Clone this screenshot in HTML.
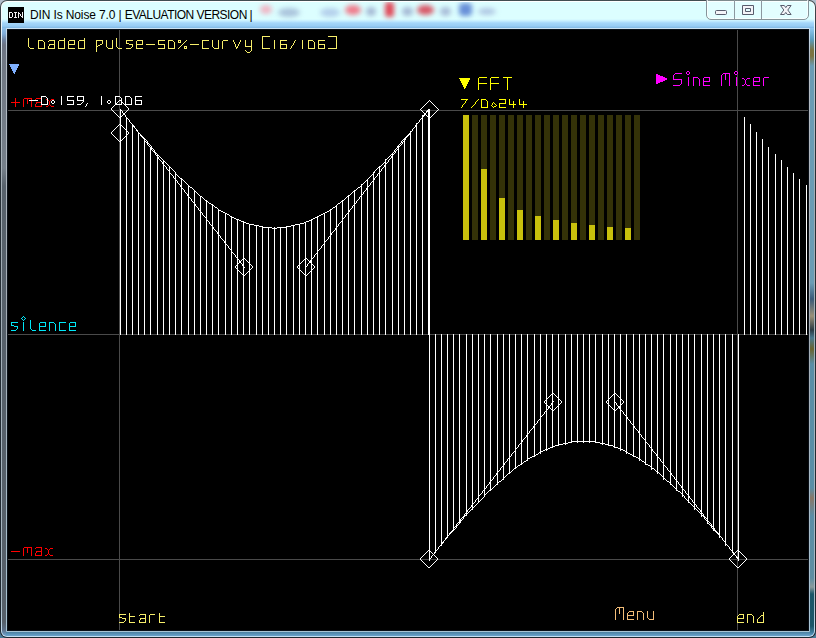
<!DOCTYPE html>
<html><head><meta charset="utf-8"><title>DIN Is Noise</title>
<style>
html,body{margin:0;padding:0;background:linear-gradient(to bottom,#b2becd 0px,#9aa6b4 40px,#4a7a98 600px);}
body{width:816px;height:638px;overflow:hidden;position:relative;font-family:"Liberation Sans",sans-serif;}
.frame{position:absolute;left:0;top:0;width:816px;height:638px;border-radius:7px;background:linear-gradient(to bottom,#424e52 0px,#2a3238 40px,#1e2830 100%);overflow:hidden;}
.hl{position:absolute;left:1px;top:1px;right:1px;bottom:1px;border-radius:6px;background:linear-gradient(to bottom,#ffffff 0px,#e8f4fc 30px,#b8c4cc 70px,#a0aab2 200px,#a8b8c4 600px,#c4e0f4 636px);}
.glass{position:absolute;left:2px;top:2px;right:2px;bottom:2px;border-radius:5px;overflow:hidden;
 background:linear-gradient(to bottom,#dcfeff 0px,#dcfeff 17px,#c4ecff 19px,#a4d6fa 21px,#98ccf4 24px,#84bce8 25.5px,#8cbce0 28px,#8cbce0 100%);}
.lglass{position:absolute;left:0;top:26px;width:5px;bottom:0;
 background:linear-gradient(to bottom,#90c0e8 0px,#80acd8 6px,#6e82a0 12px,#6c7484 17px,#707884 32px,#76808a 140px,#58626c 158px,#56606a 594px,#5c7088 602px,#6c9cc4 607px);}
.rglass{position:absolute;right:0;top:26px;width:5px;bottom:0;
 background:linear-gradient(to bottom,#90c8f0 0px,#5a9cbc 12px,#7a7444 22px,#7a7444 28px,#6a9cb4 38px,#6a9cb4 255px,#3a5a78 271px,#9a9078 288px,#2a3a44 302px,#4a7a90 310px,#6a6430 321px,#5a8ea6 336px,#5a8ea6 460px,#8a7868 470px,#5a8ea6 488px,#5e8ea2 550px,#8a9a9c 559px,#1c5668 566px,#1c5668 598px,#3c7a98 604px,#64a0c8 608px);}
.bglass{position:absolute;left:4px;right:4px;bottom:0;height:5px;background:linear-gradient(to bottom,#4a80a2 0px,#4a80a2 1px,#6aa4cc 5px);}
.blob{position:absolute;border-radius:50%;filter:blur(2.5px);}
.ihl{position:absolute;left:6px;top:28px;width:804px;height:604px;background:linear-gradient(to bottom,#cce2f4 0px,#b4bcc4 30px,#a4acb4 300px,#a8c4d4 604px);border-radius:1px;}
.idk{position:absolute;left:7px;top:29px;width:802px;height:602px;background:#0a1018;}
.content{position:absolute;left:8px;top:30px;width:800px;height:600px;background:#000;overflow:hidden;}
.gl{position:absolute;left:0;top:0;display:block;}
.icon{position:absolute;left:8px;top:7px;width:16px;height:16px;background:#000;}
.icon span{position:absolute;left:1px;top:4px;width:14px;text-align:center;font-size:7px;line-height:8px;color:#fff;font-weight:bold;letter-spacing:0px;}
.title{position:absolute;left:30px;top:7px;height:16px;line-height:16px;font-size:12px;color:#000;white-space:nowrap;letter-spacing:0px;}
.btns{position:absolute;left:706px;top:-4px;width:103px;height:24px;border:1px solid #86949a;border-radius:0 0 5px 5px;box-shadow:inset 0 0 0 1px rgba(255,255,255,.7);box-sizing:border-box;background:rgba(240,255,255,.35);}
.btns i{position:absolute;top:0;bottom:0;width:1px;background:#8c98a0;}
</style></head><body>
<div class="frame"><div class="hl"></div><div class="glass">
 <div class="blob" style="left:258px;top:3px;width:12px;height:9px;background:#f0b4c4"></div>
 <div class="blob" style="left:276px;top:6px;width:22px;height:9px;background:#aac4dc"></div>
 <div class="blob" style="left:318px;top:6px;width:20px;height:9px;background:#b4d0ec"></div>
 <div class="blob" style="left:343px;top:3px;width:16px;height:10px;background:#f07c8c"></div>
 <div class="blob" style="left:364px;top:5px;width:10px;height:9px;background:#a4b8d4"></div>
 <div class="blob" style="left:383px;top:0px;width:9px;height:15px;background:#e04858;border-radius:3px"></div>
 <div class="blob" style="left:400px;top:5px;width:11px;height:9px;background:#a4b8d4"></div>
 <div class="blob" style="left:415px;top:3px;width:17px;height:10px;background:#d85868"></div>
 <div class="blob" style="left:438px;top:5px;width:11px;height:9px;background:#a8bcd8"></div>
 <div class="blob" style="left:457px;top:1px;width:13px;height:13px;background:#6890d8;border-radius:4px"></div>
 <div class="blob" style="left:476px;top:6px;width:18px;height:7px;background:#b0c8e4"></div>
 <div class="lglass"></div><div class="rglass"></div><div class="bglass"></div>
</div>
<div class="icon"><svg width="16" height="16" viewBox="0 0 16 16" shape-rendering="crispEdges" style="position:absolute;left:0;top:0"><path d="M1,5h1v1h-1zM2,5h1v1h-1zM3,5h1v1h-1zM1,6h1v1h-1zM4,6h1v1h-1zM1,7h1v1h-1zM4,7h1v1h-1zM1,8h1v1h-1zM4,8h1v1h-1zM1,9h1v1h-1zM4,9h1v1h-1zM1,10h1v1h-1zM2,10h1v1h-1zM3,10h1v1h-1zM6,5h1v1h-1zM7,5h1v1h-1zM8,5h1v1h-1zM7,6h1v1h-1zM7,7h1v1h-1zM7,8h1v1h-1zM7,9h1v1h-1zM6,10h1v1h-1zM7,10h1v1h-1zM8,10h1v1h-1zM10,5h1v1h-1zM14,5h1v1h-1zM10,6h1v1h-1zM11,6h1v1h-1zM14,6h1v1h-1zM10,7h1v1h-1zM12,7h1v1h-1zM14,7h1v1h-1zM10,8h1v1h-1zM12,8h1v1h-1zM14,8h1v1h-1zM10,9h1v1h-1zM13,9h1v1h-1zM14,9h1v1h-1zM10,10h1v1h-1zM14,10h1v1h-1z" fill="#f2f2f2"/></svg></div>
<div class="title"><span style="letter-spacing:-0.126px">DIN Is Noise 7.0 | </span><span style="letter-spacing:-0.53px">EVALUATION VERSION |</span></div>
<div class="btns"><i style="left:27px"></i><i style="left:54px"></i>
<svg style="position:absolute;left:-1px;top:-1px" width="102" height="23" viewBox="706 -4 102 23">
 <rect x="715.5" y="10.5" width="11" height="4" rx="1" fill="#f4f4f8" stroke="#585c6c"/>
 <path fill-rule="evenodd" d="M742.5,5.5 H753.5 V14.5 H742.5 Z M745.5,8.5 V11.5 H750.5 V8.5 Z" fill="#f4f4f8" stroke="#585c6c"/>
 <path d="M780.5,5.5 H784.3 L785.8,7.6 L787.3,5.5 H791.1 L787.8,10 L791.1,14.5 H787.3 L785.8,12.4 L784.3,14.5 H780.5 L783.8,10 Z" fill="#f4f4f8" stroke="#585c6c"/>
</svg></div>
<div class="ihl"></div><div class="idk"></div>
<div class="content">
<svg class="gl" width="800" height="600" viewBox="8 30 800 600" shape-rendering="crispEdges" fill="none" stroke-width="1" stroke-linecap="square" stroke-linejoin="miter">
<path d="M8,110.5 H808 M8,334.5 H808 M8,559.5 H808 M119.5,30 V630 M737.5,30 V630" stroke="#4a4a4a"/>
<rect x="463" y="115" width="6" height="125" fill="#343208"/>
<rect x="463" y="115" width="6" height="125" fill="#c8c00c"/>
<rect x="472" y="115" width="6" height="125" fill="#343208"/>
<rect x="481" y="115" width="6" height="125" fill="#343208"/>
<rect x="481" y="169" width="6" height="71" fill="#c8c00c"/>
<rect x="490" y="115" width="6" height="125" fill="#343208"/>
<rect x="499" y="115" width="6" height="125" fill="#343208"/>
<rect x="499" y="198" width="6" height="42" fill="#c8c00c"/>
<rect x="508" y="115" width="6" height="125" fill="#343208"/>
<rect x="517" y="115" width="6" height="125" fill="#343208"/>
<rect x="517" y="210" width="6" height="30" fill="#c8c00c"/>
<rect x="526" y="115" width="6" height="125" fill="#343208"/>
<rect x="535" y="115" width="6" height="125" fill="#343208"/>
<rect x="535" y="216" width="6" height="24" fill="#c8c00c"/>
<rect x="544" y="115" width="6" height="125" fill="#343208"/>
<rect x="553" y="115" width="6" height="125" fill="#343208"/>
<rect x="553" y="220" width="6" height="20" fill="#c8c00c"/>
<rect x="562" y="115" width="6" height="125" fill="#343208"/>
<rect x="571" y="115" width="6" height="125" fill="#343208"/>
<rect x="571" y="223" width="6" height="17" fill="#c8c00c"/>
<rect x="580" y="115" width="6" height="125" fill="#343208"/>
<rect x="589" y="115" width="6" height="125" fill="#343208"/>
<rect x="589" y="225" width="6" height="15" fill="#c8c00c"/>
<rect x="598" y="115" width="6" height="125" fill="#343208"/>
<rect x="607" y="115" width="6" height="125" fill="#343208"/>
<rect x="607" y="227" width="6" height="13" fill="#c8c00c"/>
<rect x="616" y="115" width="6" height="125" fill="#343208"/>
<rect x="625" y="115" width="6" height="125" fill="#343208"/>
<rect x="625" y="228" width="6" height="12" fill="#c8c00c"/>
<rect x="634" y="115" width="6" height="125" fill="#343208"/>
<path d="M428.5,109 V334 M120.5,109 V334 M126.5,117 V334 M132.5,124 V334 M138.5,132 V334 M144.5,139 V334 M150.5,147 V334 M157.5,154 V334 M163.5,160 V334 M169.5,167 V334 M175.5,173 V334 M181.5,179 V334 M188.5,185 V334 M194.5,190 V334 M200.5,196 V334 M206.5,201 V334 M212.5,205 V334 M218.5,209 V334 M225.5,213 V334 M231.5,216 V334 M237.5,219 V334 M243.5,222 V334 M249.5,224 V334 M256.5,225 V334 M262.5,227 V334 M268.5,227 V334 M274.5,227 V334 M280.5,227 V334 M286.5,227 V334 M293.5,225 V334 M299.5,224 V334 M305.5,222 V334 M311.5,219 V334 M317.5,216 V334 M324.5,213 V334 M330.5,209 V334 M336.5,205 V334 M342.5,200 V334 M348.5,195 V334 M354.5,190 V334 M361.5,184 V334 M367.5,179 V334 M373.5,172 V334 M379.5,166 V334 M385.5,159 V334 M392.5,153 V334 M398.5,146 V334 M404.5,138 V334 M410.5,131 V334 M416.5,123 V334 M422.5,115 V334 M429.5,109 V560 M435.5,334 V552 M441.5,334 V545 M447.5,334 V537 M453.5,334 V530 M459.5,334 V522 M466.5,334 V515 M472.5,334 V509 M478.5,334 V502 M484.5,334 V496 M490.5,334 V490 M497.5,334 V484 M503.5,334 V479 M509.5,334 V473 M515.5,334 V468 M521.5,334 V464 M527.5,334 V460 M534.5,334 V456 M540.5,334 V453 M546.5,334 V450 M552.5,334 V447 M558.5,334 V445 M565.5,334 V444 M571.5,334 V442 M577.5,334 V442 M583.5,334 V442 M589.5,334 V442 M595.5,334 V442 M602.5,334 V444 M608.5,334 V445 M614.5,334 V447 M620.5,334 V450 M626.5,334 V453 M633.5,334 V456 M639.5,334 V460 M645.5,334 V464 M651.5,334 V469 M657.5,334 V473 M663.5,334 V479 M670.5,334 V484 M676.5,334 V490 M682.5,334 V496 M688.5,334 V502 M694.5,334 V509 M701.5,334 V516 M707.5,334 V523 M713.5,334 V530 M719.5,334 V537 M725.5,334 V545 M732.5,334 V552 M738.5,334 V560 M744.5,117 V334 M750.5,124 V334 M756.5,132 V334 M762.5,139 V334 M768.5,147 V334 M775.5,154 V334 M781.5,160 V334 M787.5,167 V334 M793.5,173 V334 M799.5,179 V334 M806.5,185 V334" stroke="#fff"/>
<path d="M553,446h2v1h-2zM613,446h2v1h-2zM460,520h2v1h-2zM706,520h2v1h-2zM415,125h2v1h-2zM428,567h2v1h-2zM737,567h2v1h-2zM548,448h2v1h-2zM618,448h2v1h-2zM205,200h2v1h-2zM342,200h2v1h-2zM423,115h2v1h-2zM552,393h2v1h-2zM614,393h2v1h-2zM244,222h2v1h-2zM304,222h2v1h-2zM489,490h2v1h-2zM190,187h2v1h-2zM358,187h2v1h-2zM530,457h2v1h-2zM636,457h2v1h-2zM514,468h2v1h-2zM652,468h2v1h-2zM628,453h2v1h-2zM455,526h2v1h-2zM711,526h2v1h-2zM180,178h2v1h-2zM239,220h2v1h-2zM309,220h2v1h-2zM151,148h2v1h-2zM548,406h2v1h-2zM618,406h2v1h-2zM227,214h2v1h-2zM321,214h2v1h-2zM442,542h2v1h-2zM211,204h2v1h-2zM552,410h2v1h-2zM614,410h2v1h-2zM153,151h2v1h-2zM394,151h2v1h-2zM154,152h2v1h-2zM548,407h2v1h-2zM618,407h2v1h-2zM543,450h2v1h-2zM623,450h2v1h-2zM263,227h9v1h-9zM277,227h9v1h-9zM550,447h3v1h-3zM615,447h3v1h-3zM241,221h3v1h-3zM306,221h3v1h-3zM272,228h5v1h-5zM736,557h2v1h-2zM223,212h2v1h-2zM325,212h2v1h-2zM555,445h3v1h-3zM609,445h4v1h-4zM249,224h5v1h-5zM295,224h5v1h-5zM524,461h2v1h-2zM642,461h2v1h-2zM123,114h2v1h-2zM424,114h2v1h-2zM520,464h2v1h-2zM646,464h2v1h-2zM568,442h4v1h-4zM595,442h5v1h-5zM319,215h2v1h-2zM558,444h5v1h-5zM605,444h4v1h-4zM408,134h2v1h-2zM230,216h2v1h-2zM317,216h2v1h-2zM155,153h2v1h-2zM463,516h2v1h-2zM703,516h2v1h-2zM572,441h23v1h-23zM136,130h2v1h-2zM563,443h5v1h-5zM600,443h5v1h-5zM239,262h2v1h-2zM309,262h2v1h-2zM119,117h2v1h-2zM456,525h2v1h-2zM710,525h2v1h-2zM119,141h2v1h-2zM150,147h2v1h-2zM397,147h2v1h-2zM464,515h2v1h-2zM702,515h2v1h-2zM141,136h2v1h-2zM406,136h2v1h-2zM236,219h3v1h-3zM311,219h2v1h-2zM459,521h2v1h-2zM707,521h2v1h-2zM243,258h2v1h-2zM305,258h2v1h-2zM541,451h2v1h-2zM625,451h2v1h-2zM147,143h2v1h-2zM225,213h2v1h-2zM323,213h2v1h-2zM428,550h2v1h-2zM737,550h2v1h-2zM259,226h4v1h-4zM286,226h5v1h-5zM221,211h2v1h-2zM327,211h2v1h-2zM539,452h2v1h-2zM246,223h3v1h-3zM300,223h4v1h-4zM200,196h2v1h-2zM347,196h2v1h-2zM232,217h2v1h-2zM315,217h2v1h-2zM215,207h2v1h-2zM333,207h2v1h-2zM426,111h2v1h-2zM509,472h2v1h-2zM657,472h2v1h-2zM144,139h2v1h-2zM534,455h2v1h-2zM632,455h2v1h-2zM254,225h5v1h-5zM291,225h4v1h-4zM146,142h2v1h-2zM401,142h2v1h-2zM678,491h2v1h-2zM733,553h2v1h-2zM499,481h2v1h-2zM667,481h2v1h-2zM143,138h2v1h-2zM404,138h2v1h-2zM518,465h2v1h-2zM648,465h2v1h-2zM133,126h2v1h-2zM528,458h2v1h-2zM638,458h2v1h-2zM243,275h2v1h-2zM305,275h2v1h-2zM532,456h2v1h-2zM634,456h2v1h-2zM733,554h2v1h-2zM123,113h2v1h-2zM424,113h2v1h-2zM545,449h3v1h-3zM620,449h3v1h-3zM234,218h2v1h-2zM313,218h2v1h-2zM119,124h2v1h-2zM209,203h2v1h-2zM338,203h2v1h-2zM140,135h2v1h-2zM407,135h2v1h-2zM453,529h2v1h-2zM713,529h2v1h-2zM445,538h2v1h-2zM536,454h2v1h-2zM630,454h2v1h-2zM451,531h2v1h-2zM715,531h2v1h-2zM239,261h2v1h-2zM309,261h2v1h-2zM353,191h2v1h-2zM450,532h2v1h-2zM716,532h2v1h-2zM219,210h2v1h-2zM329,210h2v1h-2zM379,166h2v1h-2zM119,100h2v1h-2zM142,137h2v1h-2zM405,137h2v1h-2zM452,530h2v1h-2zM714,530h2v1h-2zM462,517h2v1h-2zM704,517h2v1h-2zM449,533h2v1h-2zM717,533h2v1h-2zM499,470h1v1h-1zM512,453h1v1h-1zM512,470h1v1h-1zM655,453h1v1h-1zM655,470h1v1h-1zM668,470h1v1h-1zM112,107h1v1h-1zM112,110h1v1h-1zM112,131h1v1h-1zM112,134h1v1h-1zM127,107h1v1h-1zM127,110h1v1h-1zM127,118h1v1h-1zM127,131h1v1h-1zM127,134h1v1h-1zM422,107h1v1h-1zM422,111h1v1h-1zM422,117h1v1h-1zM422,556h1v1h-1zM422,561h1v1h-1zM436,107h1v1h-1zM436,111h1v1h-1zM436,550h1v1h-1zM436,557h1v1h-1zM436,560h1v1h-1zM501,467h1v1h-1zM501,480h1v1h-1zM516,448h1v1h-1zM516,467h1v1h-1zM651,448h1v1h-1zM651,467h1v1h-1zM666,467h1v1h-1zM666,480h1v1h-1zM111,108h1v2h-1zM111,132h1v2h-1zM128,108h1v2h-1zM128,119h1v1h-1zM128,132h1v2h-1zM138,132h1v1h-1zM410,132h1v1h-1zM518,445h1v2h-1zM649,445h1v2h-1zM221,238h1v1h-1zM328,237h1v2h-1zM118,101h1v1h-1zM118,116h1v1h-1zM118,125h1v1h-1zM118,140h1v1h-1zM121,101h1v1h-1zM121,110h1v1h-1zM121,116h1v1h-1zM121,125h1v1h-1zM121,140h1v1h-1zM133,125h1v1h-1zM191,199h1v2h-1zM357,188h1v1h-1zM357,200h1v1h-1zM117,102h1v1h-1zM117,115h1v1h-1zM117,126h1v1h-1zM117,139h1v1h-1zM122,102h1v1h-1zM122,111h1v2h-1zM122,115h1v1h-1zM122,126h1v1h-1zM122,139h1v1h-1zM125,105h1v1h-1zM125,112h1v1h-1zM125,115h1v2h-1zM125,129h1v1h-1zM125,136h1v1h-1zM426,103h1v1h-1zM426,112h1v1h-1zM426,115h1v1h-1zM426,552h1v1h-1zM426,565h1v1h-1zM432,103h1v1h-1zM432,115h1v1h-1zM432,553h1v1h-1zM432,555h1v1h-1zM432,564h1v1h-1zM209,222h1v2h-1zM340,202h1v1h-1zM340,222h1v1h-1zM137,131h1v1h-1zM411,131h1v1h-1zM483,490h1v1h-1zM483,497h1v1h-1zM677,481h1v1h-1zM677,490h1v1h-1zM684,490h1v1h-1zM684,496h1v2h-1zM147,141h1v1h-1zM147,144h1v1h-1zM149,144h1v1h-1zM149,146h1v1h-1zM399,144h1v1h-1zM399,146h1v1h-1zM401,141h1v1h-1zM401,144h1v1h-1zM162,159h1v1h-1zM162,162h1v2h-1zM165,162h1v1h-1zM165,166h1v1h-1zM384,162h1v1h-1zM384,165h1v2h-1zM387,158h1v1h-1zM387,162h1v1h-1zM181,187h1v1h-1zM367,179h1v1h-1zM367,187h1v1h-1zM491,480h1v1h-1zM491,489h1v1h-1zM676,480h1v1h-1zM676,489h1v1h-1zM457,523h1v1h-1zM459,523h1v1h-1zM708,523h1v1h-1zM710,523h1v1h-1zM148,145h1v1h-1zM150,145h1v1h-1zM398,145h1v1h-1zM398,148h1v1h-1zM400,143h1v1h-1zM400,145h1v1h-1zM509,457h1v1h-1zM658,457h1v1h-1zM500,468h1v2h-1zM667,468h1v2h-1zM538,420h1v1h-1zM538,453h1v1h-1zM182,179h1v1h-1zM182,188h1v1h-1zM192,188h1v1h-1zM192,201h1v1h-1zM366,180h1v1h-1zM366,188h1v2h-1zM471,505h1v2h-1zM471,509h1v1h-1zM474,502h1v1h-1zM474,506h1v1h-1zM693,502h1v1h-1zM693,506h1v1h-1zM696,505h1v2h-1zM696,509h1v1h-1zM242,259h1v1h-1zM242,264h1v2h-1zM242,274h1v1h-1zM245,259h1v1h-1zM245,274h1v1h-1zM304,259h1v1h-1zM304,274h1v1h-1zM307,259h1v1h-1zM307,264h1v2h-1zM307,274h1v1h-1zM174,171h1v1h-1zM174,178h1v1h-1zM368,178h1v1h-1zM368,186h1v1h-1zM374,171h1v2h-1zM374,178h1v2h-1zM166,163h1v1h-1zM166,167h1v2h-1zM171,168h1v1h-1zM171,174h1v1h-1zM377,168h1v1h-1zM377,174h1v2h-1zM382,164h1v1h-1zM382,168h1v1h-1zM446,537h1v1h-1zM721,537h1v1h-1zM207,201h1v1h-1zM207,220h1v1h-1zM342,219h1v2h-1zM187,184h1v1h-1zM187,194h1v2h-1zM198,194h1v1h-1zM198,208h1v2h-1zM350,194h1v1h-1zM350,209h1v1h-1zM362,184h1v1h-1zM362,194h1v1h-1zM442,543h1v1h-1zM725,542h1v2h-1zM396,148h1v1h-1zM396,150h1v1h-1zM530,430h1v1h-1zM637,430h1v1h-1zM465,513h1v1h-1zM467,510h1v2h-1zM467,513h1v1h-1zM700,510h1v2h-1zM700,513h1v1h-1zM702,513h1v1h-1zM423,106h1v1h-1zM423,112h1v1h-1zM423,116h1v1h-1zM423,555h1v1h-1zM423,562h1v1h-1zM434,105h1v1h-1zM434,113h1v1h-1zM434,552h1v2h-1zM434,555h1v1h-1zM434,562h1v1h-1zM732,551h1v1h-1zM732,555h1v1h-1zM732,562h1v1h-1zM735,552h1v1h-1zM735,555h1v1h-1zM735,565h1v1h-1zM743,555h1v1h-1zM743,562h1v1h-1zM116,103h1v1h-1zM116,114h1v1h-1zM116,127h1v1h-1zM116,138h1v1h-1zM123,103h1v1h-1zM123,127h1v1h-1zM123,138h1v1h-1zM557,397h1v1h-1zM557,406h1v1h-1zM610,397h1v1h-1zM610,406h1v1h-1zM202,197h1v1h-1zM202,213h1v2h-1zM346,197h1v1h-1zM346,214h1v1h-1zM420,109h1v1h-1zM420,119h1v1h-1zM420,558h1v2h-1zM430,101h1v1h-1zM430,117h1v1h-1zM430,551h1v1h-1zM430,558h1v1h-1zM430,566h1v1h-1zM437,108h1v1h-1zM437,110h1v1h-1zM437,549h1v1h-1zM437,558h1v2h-1zM729,547h1v2h-1zM729,558h1v2h-1zM737,558h1v1h-1zM746,558h1v2h-1zM195,191h1v1h-1zM195,204h1v2h-1zM337,204h1v1h-1zM337,226h1v1h-1zM354,204h1v1h-1zM545,400h1v1h-1zM545,403h1v1h-1zM545,411h1v1h-1zM560,400h1v1h-1zM560,403h1v1h-1zM607,400h1v1h-1zM607,403h1v1h-1zM622,400h1v1h-1zM622,403h1v1h-1zM622,411h1v1h-1zM546,399h1v1h-1zM546,404h1v1h-1zM546,410h1v1h-1zM621,399h1v1h-1zM621,404h1v1h-1zM621,410h1v1h-1zM476,499h1v1h-1zM476,504h1v1h-1zM481,493h1v1h-1zM481,499h1v1h-1zM686,493h1v1h-1zM686,499h1v1h-1zM691,499h1v1h-1zM691,504h1v1h-1zM179,177h1v1h-1zM179,184h1v1h-1zM370,176h1v1h-1zM370,183h1v2h-1zM237,258h1v1h-1zM237,264h1v1h-1zM237,269h1v1h-1zM250,264h1v1h-1zM250,269h1v1h-1zM299,264h1v1h-1zM299,269h1v1h-1zM312,258h1v1h-1zM312,264h1v1h-1zM312,269h1v1h-1zM544,401h1v2h-1zM544,412h1v2h-1zM553,401h1v1h-1zM561,401h1v2h-1zM606,401h1v2h-1zM614,401h1v1h-1zM623,401h1v2h-1zM623,412h1v2h-1zM460,519h1v1h-1zM460,522h1v1h-1zM462,519h1v1h-1zM705,519h1v1h-1zM707,519h1v1h-1zM707,522h1v1h-1zM478,496h1v2h-1zM478,502h1v1h-1zM484,489h1v1h-1zM484,495h1v2h-1zM689,496h1v2h-1zM689,502h1v1h-1zM115,104h1v1h-1zM115,113h1v1h-1zM115,128h1v1h-1zM115,137h1v1h-1zM124,104h1v1h-1zM124,128h1v1h-1zM124,137h1v1h-1zM135,128h1v1h-1zM413,128h1v1h-1zM393,152h1v1h-1zM393,154h1v1h-1zM395,149h1v1h-1zM395,152h1v1h-1zM486,486h1v2h-1zM486,493h1v1h-1zM494,476h1v1h-1zM494,486h1v1h-1zM673,476h1v1h-1zM673,486h1v1h-1zM681,486h1v2h-1zM681,493h1v1h-1zM158,155h1v1h-1zM158,157h1v2h-1zM160,157h1v1h-1zM160,160h1v1h-1zM388,157h1v1h-1zM388,160h1v2h-1zM391,154h1v1h-1zM391,156h1v2h-1zM556,396h1v1h-1zM556,407h1v1h-1zM611,396h1v1h-1zM611,407h1v1h-1zM184,181h1v1h-1zM184,190h1v2h-1zM194,190h1v1h-1zM194,203h1v1h-1zM355,190h1v1h-1zM355,203h1v1h-1zM365,181h1v1h-1zM365,190h1v1h-1zM515,449h1v2h-1zM652,449h1v2h-1zM213,205h1v1h-1zM213,227h1v2h-1zM336,205h1v1h-1zM336,227h1v1h-1zM168,165h1v1h-1zM168,170h1v1h-1zM173,170h1v1h-1zM173,176h1v2h-1zM375,170h1v1h-1zM375,177h1v1h-1zM381,165h1v1h-1zM381,169h1v2h-1zM180,185h1v2h-1zM188,185h1v1h-1zM188,196h1v1h-1zM361,185h1v1h-1zM361,195h1v1h-1zM369,177h1v1h-1zM369,185h1v1h-1zM169,166h1v1h-1zM169,171h1v2h-1zM380,171h1v1h-1zM517,447h1v1h-1zM517,466h1v1h-1zM650,447h1v1h-1zM650,466h1v1h-1zM208,202h1v1h-1zM208,221h1v1h-1zM341,201h1v1h-1zM341,221h1v1h-1zM335,206h1v1h-1zM335,228h1v2h-1zM427,102h1v1h-1zM427,110h1v1h-1zM427,116h1v1h-1zM427,551h1v1h-1zM427,566h1v1h-1zM435,106h1v1h-1zM435,112h1v1h-1zM435,551h1v1h-1zM435,556h1v1h-1zM435,561h1v1h-1zM736,551h1v1h-1zM736,556h1v1h-1zM736,566h1v1h-1zM739,551h1v1h-1zM739,566h1v1h-1zM552,402h1v1h-1zM615,402h1v1h-1zM424,105h1v1h-1zM424,554h1v1h-1zM424,563h1v1h-1zM433,104h1v1h-1zM433,114h1v1h-1zM433,554h1v1h-1zM433,563h1v1h-1zM733,552h1v1h-1zM733,563h1v1h-1zM742,554h1v1h-1zM742,563h1v1h-1zM431,102h1v1h-1zM431,116h1v1h-1zM431,552h1v1h-1zM431,556h1v2h-1zM431,565h1v1h-1zM421,108h1v1h-1zM421,110h1v1h-1zM421,118h1v1h-1zM421,557h1v1h-1zM421,560h1v1h-1zM730,549h1v1h-1zM730,557h1v1h-1zM730,560h1v1h-1zM745,557h1v1h-1zM745,560h1v1h-1zM201,212h1v1h-1zM348,212h1v1h-1zM210,224h1v1h-1zM338,224h1v2h-1zM506,461h1v1h-1zM506,475h1v1h-1zM661,461h1v1h-1zM661,475h1v1h-1zM223,240h1v1h-1zM326,240h1v1h-1zM529,431h1v2h-1zM638,431h1v2h-1zM504,463h1v2h-1zM504,477h1v1h-1zM663,463h1v2h-1zM663,477h1v1h-1zM139,133h1v1h-1zM409,133h1v1h-1zM238,259h1v1h-1zM238,263h1v1h-1zM238,270h1v1h-1zM249,263h1v1h-1zM249,270h1v1h-1zM300,263h1v1h-1zM300,270h1v1h-1zM311,259h1v1h-1zM311,263h1v1h-1zM311,270h1v1h-1zM493,477h1v2h-1zM493,487h1v1h-1zM674,477h1v2h-1zM674,487h1v1h-1zM444,540h1v1h-1zM723,540h1v1h-1zM540,417h1v2h-1zM627,417h1v2h-1zM627,452h1v1h-1zM521,442h1v1h-1zM646,442h1v1h-1zM134,127h1v1h-1zM414,127h1v1h-1zM429,100h1v1h-1zM429,118h1v1h-1zM429,559h1v1h-1zM738,559h1v1h-1zM203,198h1v1h-1zM203,215h1v1h-1zM229,215h1v1h-1zM229,248h1v1h-1zM345,198h1v1h-1zM345,215h1v2h-1zM528,433h1v1h-1zM639,433h1v1h-1zM236,257h1v1h-1zM236,265h1v1h-1zM236,268h1v1h-1zM251,265h1v1h-1zM251,268h1v1h-1zM298,265h1v1h-1zM298,268h1v1h-1zM313,257h1v1h-1zM313,265h1v1h-1zM313,268h1v1h-1zM519,444h1v1h-1zM648,444h1v1h-1zM140,134h1v1h-1zM731,550h1v1h-1zM731,556h1v1h-1zM731,561h1v1h-1zM744,556h1v1h-1zM744,561h1v1h-1zM239,260h1v1h-1zM239,271h1v1h-1zM248,262h1v1h-1zM248,271h1v1h-1zM301,262h1v1h-1zM301,271h1v1h-1zM310,260h1v1h-1zM310,271h1v1h-1zM231,250h1v2h-1zM317,251h1v2h-1zM204,199h1v1h-1zM204,216h1v1h-1zM177,175h1v1h-1zM177,181h1v2h-1zM185,182h1v1h-1zM185,192h1v1h-1zM364,182h1v1h-1zM364,191h1v1h-1zM371,175h1v1h-1zM371,182h1v1h-1zM392,153h1v1h-1zM392,155h1v1h-1zM394,150h1v1h-1zM394,153h1v1h-1zM551,394h1v1h-1zM551,403h1v2h-1zM551,409h1v1h-1zM616,394h1v1h-1zM616,403h1v2h-1zM616,409h1v1h-1zM559,399h1v1h-1zM559,404h1v1h-1zM608,399h1v1h-1zM608,404h1v1h-1zM522,440h1v2h-1zM522,463h1v1h-1zM645,440h1v2h-1zM645,463h1v1h-1zM113,106h1v1h-1zM113,111h1v1h-1zM113,130h1v1h-1zM113,135h1v1h-1zM126,106h1v1h-1zM126,111h1v1h-1zM126,117h1v1h-1zM126,130h1v1h-1zM126,135h1v1h-1zM412,129h1v2h-1zM155,154h1v1h-1zM157,154h1v1h-1zM157,156h1v1h-1zM170,167h1v1h-1zM170,173h1v1h-1zM175,172h1v2h-1zM175,179h1v1h-1zM373,173h1v1h-1zM373,180h1v1h-1zM378,167h1v1h-1zM378,173h1v1h-1zM189,186h1v1h-1zM189,197h1v1h-1zM360,186h1v1h-1zM360,196h1v1h-1zM547,398h1v1h-1zM547,405h1v1h-1zM547,409h1v1h-1zM554,394h1v1h-1zM554,409h1v1h-1zM613,394h1v1h-1zM613,409h1v1h-1zM620,398h1v1h-1zM620,405h1v1h-1zM620,409h1v1h-1zM176,174h1v1h-1zM176,180h1v1h-1zM372,174h1v1h-1zM372,181h1v1h-1zM120,109h1v1h-1zM428,101h1v1h-1zM428,109h1v1h-1zM428,117h1v1h-1zM438,109h1v1h-1zM438,547h1v2h-1zM520,443h1v1h-1zM647,443h1v1h-1zM507,459h1v2h-1zM507,474h1v1h-1zM527,434h1v1h-1zM527,459h1v1h-1zM640,434h1v1h-1zM640,459h1v1h-1zM660,459h1v2h-1zM660,474h1v1h-1zM235,255h1v2h-1zM235,266h1v2h-1zM244,267h1v1h-1zM252,266h1v2h-1zM297,266h1v2h-1zM305,267h1v1h-1zM314,255h1v2h-1zM314,266h1v2h-1zM156,155h1v1h-1zM390,155h1v1h-1zM390,158h1v1h-1zM496,473h1v2h-1zM496,484h1v1h-1zM508,458h1v1h-1zM508,473h1v1h-1zM659,458h1v1h-1zM659,473h1v1h-1zM671,473h1v2h-1zM671,484h1v1h-1zM503,465h1v1h-1zM503,478h1v1h-1zM664,465h1v1h-1zM664,478h1v1h-1zM225,243h1v1h-1zM324,242h1v2h-1zM226,244h1v1h-1zM323,244h1v1h-1zM344,199h1v1h-1zM344,217h1v1h-1zM358,199h1v1h-1zM144,140h1v1h-1zM146,140h1v1h-1zM402,140h1v1h-1zM402,143h1v1h-1zM404,140h1v1h-1zM492,479h1v1h-1zM492,488h1v1h-1zM502,466h1v1h-1zM502,479h1v1h-1zM665,466h1v1h-1zM665,479h1v1h-1zM675,479h1v1h-1zM675,488h1v1h-1zM151,146h1v1h-1zM151,149h1v1h-1zM153,149h1v1h-1zM397,146h1v1h-1zM397,149h1v1h-1zM163,160h1v1h-1zM163,164h1v1h-1zM385,160h1v2h-1zM385,164h1v1h-1zM383,163h1v1h-1zM383,167h1v1h-1zM386,159h1v1h-1zM386,163h1v1h-1zM145,141h1v1h-1zM403,139h1v1h-1zM403,141h1v1h-1zM152,150h1v1h-1zM154,150h1v1h-1zM487,485h1v1h-1zM487,492h1v1h-1zM495,475h1v1h-1zM495,485h1v1h-1zM672,475h1v1h-1zM672,485h1v1h-1zM680,485h1v1h-1zM680,492h1v1h-1zM453,528h1v1h-1zM455,528h1v1h-1zM712,528h1v1h-1zM714,528h1v1h-1zM526,435h1v2h-1zM526,460h1v1h-1zM641,435h1v2h-1zM641,460h1v1h-1zM114,105h1v1h-1zM114,112h1v1h-1zM114,129h1v1h-1zM114,136h1v1h-1zM241,260h1v1h-1zM241,263h1v1h-1zM241,273h1v1h-1zM308,260h1v1h-1zM308,263h1v1h-1zM308,273h1v1h-1zM206,218h1v2h-1zM129,120h1v2h-1zM419,120h1v2h-1zM550,395h1v1h-1zM550,405h1v1h-1zM550,408h1v1h-1zM558,398h1v1h-1zM558,405h1v1h-1zM609,398h1v1h-1zM609,405h1v1h-1zM617,395h1v1h-1zM617,405h1v1h-1zM617,408h1v1h-1zM246,260h1v1h-1zM246,273h1v1h-1zM303,260h1v1h-1zM303,273h1v1h-1zM458,522h1v1h-1zM458,524h1v1h-1zM709,522h1v1h-1zM709,524h1v1h-1zM425,104h1v1h-1zM425,553h1v1h-1zM425,564h1v1h-1zM734,564h1v1h-1zM741,553h1v1h-1zM741,564h1v1h-1zM475,500h1v2h-1zM475,505h1v1h-1zM479,495h1v1h-1zM479,501h1v1h-1zM688,495h1v1h-1zM688,501h1v1h-1zM692,500h1v2h-1zM692,505h1v1h-1zM505,462h1v1h-1zM505,476h1v1h-1zM662,462h1v1h-1zM662,476h1v1h-1zM514,451h1v1h-1zM653,451h1v1h-1zM172,169h1v1h-1zM172,175h1v1h-1zM347,213h1v1h-1zM178,176h1v1h-1zM178,183h1v1h-1zM376,169h1v1h-1zM376,176h1v1h-1zM740,552h1v1h-1zM740,565h1v1h-1zM186,183h1v1h-1zM186,193h1v1h-1zM197,193h1v1h-1zM197,207h1v1h-1zM351,193h1v1h-1zM351,208h1v1h-1zM363,183h1v1h-1zM363,192h1v2h-1zM464,514h1v1h-1zM466,512h1v1h-1zM466,514h1v1h-1zM701,512h1v1h-1zM701,514h1v1h-1zM703,514h1v1h-1zM212,226h1v1h-1zM534,425h1v1h-1zM633,425h1v1h-1zM200,211h1v1h-1zM349,195h1v1h-1zM349,210h1v2h-1zM549,396h1v1h-1zM618,396h1v1h-1zM227,245h1v1h-1zM322,245h1v1h-1zM183,180h1v1h-1zM183,189h1v1h-1zM228,246h1v2h-1zM321,246h1v2h-1zM482,491h1v2h-1zM482,498h1v1h-1zM685,491h1v2h-1zM685,498h1v1h-1zM489,482h1v2h-1zM498,471h1v1h-1zM498,482h1v1h-1zM669,471h1v1h-1zM669,482h1v1h-1zM678,482h1v2h-1zM219,235h1v1h-1zM330,235h1v1h-1zM440,545h1v1h-1zM727,545h1v1h-1zM555,395h1v1h-1zM555,408h1v1h-1zM612,395h1v1h-1zM612,408h1v1h-1zM513,452h1v1h-1zM513,469h1v1h-1zM654,452h1v1h-1zM654,469h1v1h-1zM533,426h1v2h-1zM634,426h1v2h-1zM339,223h1v1h-1zM131,123h1v1h-1zM417,123h1v1h-1zM485,488h1v1h-1zM485,494h1v1h-1zM682,488h1v1h-1zM682,494h1v1h-1zM469,508h1v1h-1zM469,511h1v1h-1zM472,504h1v1h-1zM472,508h1v1h-1zM695,504h1v1h-1zM695,508h1v1h-1zM698,508h1v1h-1zM698,511h1v1h-1zM683,489h1v1h-1zM683,495h1v1h-1zM205,217h1v1h-1zM167,164h1v1h-1zM167,169h1v1h-1zM352,192h1v1h-1zM352,206h1v2h-1zM497,472h1v1h-1zM497,483h1v1h-1zM670,472h1v1h-1zM670,483h1v1h-1zM320,248h1v1h-1zM488,484h1v1h-1zM488,491h1v1h-1zM679,484h1v1h-1zM230,249h1v1h-1zM319,249h1v1h-1zM477,498h1v1h-1zM477,503h1v1h-1zM690,498h1v1h-1zM690,503h1v1h-1zM480,494h1v1h-1zM480,500h1v1h-1zM687,494h1v1h-1zM687,500h1v1h-1zM356,189h1v1h-1zM356,201h1v2h-1zM461,518h1v1h-1zM463,518h1v1h-1zM704,518h1v1h-1zM706,518h1v1h-1zM193,189h1v1h-1zM193,202h1v1h-1zM405,139h1v1h-1zM511,454h1v2h-1zM511,471h1v1h-1zM656,454h1v2h-1zM656,471h1v1h-1zM548,397h1v1h-1zM548,408h1v1h-1zM619,397h1v1h-1zM619,408h1v1h-1zM159,156h1v1h-1zM159,159h1v1h-1zM389,156h1v1h-1zM389,159h1v1h-1zM211,225h1v1h-1zM199,195h1v1h-1zM199,210h1v1h-1zM190,198h1v1h-1zM359,197h1v2h-1zM454,527h1v1h-1zM456,524h1v1h-1zM456,527h1v1h-1zM711,524h1v1h-1zM711,527h1v1h-1zM713,527h1v1h-1zM196,192h1v1h-1zM196,206h1v1h-1zM379,172h1v1h-1zM490,481h1v1h-1zM161,158h1v1h-1zM161,161h1v1h-1zM217,208h1v1h-1zM217,232h1v2h-1zM332,208h1v1h-1zM332,232h1v1h-1zM415,126h1v1h-1zM543,414h1v1h-1zM624,414h1v1h-1zM240,272h1v1h-1zM247,261h1v1h-1zM247,272h1v1h-1zM302,261h1v1h-1zM302,272h1v1h-1zM309,272h1v1h-1zM629,420h1v1h-1zM318,250h1v1h-1zM136,129h1v1h-1zM510,456h1v1h-1zM657,456h1v1h-1zM215,230h1v1h-1zM334,230h1v1h-1zM353,205h1v1h-1zM537,421h1v2h-1zM630,421h1v2h-1zM532,428h1v1h-1zM635,428h1v1h-1zM232,252h1v1h-1zM234,254h1v1h-1zM315,254h1v1h-1zM343,218h1v1h-1zM473,503h1v1h-1zM473,507h1v1h-1zM694,503h1v1h-1zM694,507h1v1h-1zM132,124h1v1h-1zM416,124h1v1h-1zM470,507h1v1h-1zM470,510h1v1h-1zM697,507h1v1h-1zM697,510h1v1h-1zM164,161h1v1h-1zM164,165h1v1h-1zM468,509h1v1h-1zM468,512h1v1h-1zM699,509h1v1h-1zM699,512h1v1h-1zM441,544h1v1h-1zM726,544h1v1h-1zM448,535h1v1h-1zM719,535h1v1h-1zM525,437h1v1h-1zM642,437h1v1h-1zM722,538h1v2h-1zM331,209h1v1h-1zM331,233h1v2h-1zM531,429h1v1h-1zM636,429h1v1h-1zM218,209h1v1h-1zM218,234h1v1h-1zM214,206h1v1h-1zM214,229h1v1h-1zM542,415h1v1h-1zM625,415h1v1h-1zM439,546h1v1h-1zM728,546h1v1h-1zM523,439h1v1h-1zM523,462h1v1h-1zM644,439h1v1h-1zM644,462h1v1h-1zM216,231h1v1h-1zM333,231h1v1h-1zM233,253h1v1h-1zM316,253h1v1h-1zM535,424h1v1h-1zM632,424h1v1h-1zM130,122h1v1h-1zM418,122h1v1h-1zM541,416h1v1h-1zM626,416h1v1h-1zM243,266h1v1h-1zM306,266h1v1h-1zM445,539h1v1h-1zM220,236h1v2h-1zM536,423h1v1h-1zM631,423h1v1h-1zM449,534h1v1h-1zM718,534h1v1h-1zM222,239h1v1h-1zM327,239h1v1h-1zM447,536h1v1h-1zM720,536h1v1h-1zM524,438h1v1h-1zM643,438h1v1h-1zM329,236h1v1h-1zM224,241h1v2h-1zM443,541h1v1h-1zM724,541h1v1h-1zM539,419h1v1h-1zM628,419h1v1h-1zM325,241h1v1h-1z" fill="#fff" stroke="none"/>


<path d="M9,64 H19.5 L14.25,74.5 Z" fill="#7fb0ff"/><path d="M459,78 H470.5 L464.75,89.5 Z" fill="#ffff00"/><path d="M656,73.5 V84.5 L668,79 Z" fill="#ff00ff"/>
<path d="M38,40h5v1h-5zM49,40h6v1h-6zM59,40h6v1h-6zM69,40h6v1h-6zM79,40h6v1h-6zM96,40h7v1h-7zM126,40h7v1h-7zM137,40h6v1h-6zM158,40h7v1h-7zM168,40h5v1h-5zM178,40h3v1h-3zM202,40h7v1h-7zM223,40h5v1h-5zM280,40h7v1h-7zM308,40h5v1h-5zM318,40h7v1h-7zM30,48h4v1h-4zM38,48h7v1h-7zM48,48h7v1h-7zM58,48h7v1h-7zM68,48h7v1h-7zM78,48h7v1h-7zM108,48h5v1h-5zM118,48h4v1h-4zM126,48h5v1h-5zM136,48h7v1h-7zM158,48h7v1h-7zM168,48h7v1h-7zM184,48h3v1h-3zM202,48h7v1h-7zM214,48h5v1h-5zM262,48h8v1h-8zM280,48h7v1h-7zM308,48h7v1h-7zM318,48h7v1h-7zM328,48h9v1h-9zM49,44h6v1h-6zM68,44h7v1h-7zM100,44h2v1h-2zM129,44h4v1h-4zM136,44h7v1h-7zM146,44h9v1h-9zM158,44h7v1h-7zM190,44h9v1h-9zM280,44h7v1h-7zM318,44h7v1h-7zM178,42h3v1h-3zM98,45h2v1h-2zM236,47h2v1h-2zM262,36h8v1h-8zM328,36h9v1h-9zM126,43h3v1h-3zM96,46h2v1h-2zM184,46h3v1h-3zM245,46h7v1h-7zM247,52h3v1h-3zM28,38h1v9h-1zM106,40h1v7h-1zM112,40h1v8h-1zM116,38h1v9h-1zM186,40h1v1h-1zM186,47h1v1h-1zM212,40h1v7h-1zM218,40h1v8h-1zM233,40h1v2h-1zM240,40h1v2h-1zM245,40h1v6h-1zM245,50h1v1h-1zM251,40h1v6h-1zM251,47h1v4h-1zM262,37h1v11h-1zM274,40h1v9h-1zM295,40h1v1h-1zM302,40h1v9h-1zM336,37h1v11h-1zM96,41h1v5h-1zM96,47h1v5h-1zM178,41h1v1h-1zM178,48h1v1h-1zM222,41h1v8h-1zM236,48h1v1h-1zM290,48h1v1h-1zM38,41h1v7h-1zM43,41h1v1h-1zM48,41h1v1h-1zM48,46h1v2h-1zM54,41h1v3h-1zM54,45h1v3h-1zM58,41h1v7h-1zM64,38h1v2h-1zM64,41h1v7h-1zM68,41h1v3h-1zM68,45h1v3h-1zM74,41h1v3h-1zM78,41h1v7h-1zM84,38h1v2h-1zM84,41h1v7h-1zM102,41h1v3h-1zM126,41h1v2h-1zM136,41h1v3h-1zM136,45h1v3h-1zM142,41h1v3h-1zM158,41h1v3h-1zM168,41h1v7h-1zM173,41h1v1h-1zM180,41h1v1h-1zM180,46h1v1h-1zM185,41h1v1h-1zM202,41h1v7h-1zM280,41h1v3h-1zM280,45h1v3h-1zM294,41h1v2h-1zM308,41h1v7h-1zM313,41h1v1h-1zM318,41h1v3h-1zM318,45h1v3h-1zM44,42h1v6h-1zM174,42h1v6h-1zM182,44h1v1h-1zM235,44h1v3h-1zM238,44h1v2h-1zM293,43h1v2h-1zM314,42h1v6h-1zM184,42h1v1h-1zM184,47h1v1h-1zM234,42h1v2h-1zM239,42h1v2h-1zM49,45h1v1h-1zM132,45h1v2h-1zM164,45h1v3h-1zM181,45h1v1h-1zM286,45h1v3h-1zM292,45h1v1h-1zM324,45h1v3h-1zM29,47h1v1h-1zM107,47h1v1h-1zM117,47h1v1h-1zM131,47h1v1h-1zM179,47h1v1h-1zM213,47h1v1h-1zM291,46h1v2h-1zM183,43h1v1h-1zM237,46h1v1h-1zM246,51h1v1h-1zM250,51h1v1h-1z" fill="#f7ee6a" stroke="none"/>
<path d="M35,106h7v1h-7zM46,106h2v1h-2zM51,106h3v1h-3zM11,102h9v1h-9zM36,102h6v1h-6zM46,99h2v1h-2zM51,99h3v1h-3zM24,98h8v1h-8zM36,98h6v1h-6zM15,98h1v4h-1zM15,103h1v4h-1zM23,99h1v8h-1zM31,99h1v8h-1zM35,99h1v1h-1zM35,104h1v2h-1zM41,99h1v3h-1zM41,103h1v3h-1zM49,101h1v4h-1zM27,99h1v5h-1zM36,103h1v1h-1zM48,100h1v1h-1zM48,105h1v1h-1zM50,100h1v1h-1zM50,105h1v1h-1z" fill="#ff0000" stroke="none"/>
<path d="M41,104h7v1h-7zM67,104h7v1h-7zM77,104h4v1h-4zM115,104h7v1h-7zM125,104h7v1h-7zM135,104h7v1h-7zM29,100h9v1h-9zM52,100h2v1h-2zM67,100h7v1h-7zM77,100h7v1h-7zM108,100h2v1h-2zM135,100h7v1h-7zM52,103h2v1h-2zM108,103h2v1h-2zM41,96h5v1h-5zM67,96h7v1h-7zM77,96h7v1h-7zM115,96h5v1h-5zM125,96h5v1h-5zM135,96h7v1h-7zM41,97h1v7h-1zM46,97h1v1h-1zM61,96h1v9h-1zM67,97h1v3h-1zM77,97h1v3h-1zM83,97h1v3h-1zM83,101h1v1h-1zM101,96h1v9h-1zM115,97h1v7h-1zM120,97h1v1h-1zM125,97h1v7h-1zM130,97h1v1h-1zM135,97h1v3h-1zM135,101h1v3h-1zM86,104h1v2h-1zM47,98h1v6h-1zM121,98h1v6h-1zM131,98h1v6h-1zM73,101h1v3h-1zM81,103h1v1h-1zM87,103h1v1h-1zM141,101h1v3h-1zM51,101h1v2h-1zM54,101h1v2h-1zM82,102h1v1h-1zM107,101h1v2h-1zM110,101h1v2h-1zM85,106h1v1h-1z" fill="#ffffff" stroke="none"/>
<path d="M11,330h5v1h-5zM32,330h4v1h-4zM39,330h7v1h-7zM59,330h7v1h-7zM69,330h7v1h-7zM11,325h3v1h-3zM11,322h7v1h-7zM40,322h6v1h-6zM49,322h5v1h-5zM59,322h7v1h-7zM70,322h6v1h-6zM14,326h4v1h-4zM39,326h7v1h-7zM69,326h7v1h-7zM23,316h1v1h-1zM23,320h1v1h-1zM23,322h1v9h-1zM49,323h1v8h-1zM55,324h1v7h-1zM11,323h1v2h-1zM30,320h1v9h-1zM39,323h1v3h-1zM39,327h1v3h-1zM45,323h1v3h-1zM54,323h1v1h-1zM59,323h1v7h-1zM69,323h1v3h-1zM69,327h1v3h-1zM75,323h1v3h-1zM21,318h1v1h-1zM25,318h1v1h-1zM16,329h1v1h-1zM31,329h1v1h-1zM17,327h1v2h-1zM22,317h1v1h-1zM22,319h1v1h-1zM24,317h1v1h-1zM24,319h1v1h-1z" fill="#00e6f6" stroke="none"/>
<path d="M45,548h2v1h-2zM50,548h3v1h-3zM35,555h7v1h-7zM45,555h2v1h-2zM50,555h3v1h-3zM11,551h9v1h-9zM36,551h6v1h-6zM24,547h8v1h-8zM36,547h6v1h-6zM23,548h1v8h-1zM27,548h1v5h-1zM31,548h1v8h-1zM35,548h1v1h-1zM35,553h1v2h-1zM41,548h1v3h-1zM41,552h1v3h-1zM48,550h1v4h-1zM36,552h1v1h-1zM47,549h1v1h-1zM47,554h1v1h-1zM49,549h1v1h-1zM49,554h1v1h-1z" fill="#ff0000" stroke="none"/>
<path d="M119,614h7v1h-7zM140,614h6v1h-6zM150,614h5v1h-5zM119,622h5v1h-5zM129,622h6v1h-6zM139,622h7v1h-7zM159,622h6v1h-6zM129,616h6v1h-6zM159,616h6v1h-6zM122,618h4v1h-4zM140,618h6v1h-6zM119,617h3v1h-3zM119,615h1v2h-1zM129,613h1v3h-1zM129,617h1v5h-1zM139,615h1v1h-1zM139,620h1v2h-1zM145,615h1v3h-1zM145,619h1v3h-1zM149,615h1v8h-1zM159,613h1v3h-1zM159,617h1v5h-1zM125,619h1v2h-1zM140,619h1v1h-1zM124,621h1v1h-1z" fill="#f7ee6a" stroke="none"/>
<path d="M737,618h7v1h-7zM737,622h7v1h-7zM757,622h7v1h-7zM739,614h5v1h-5zM747,614h5v1h-5zM761,615h3v1h-3zM747,615h1v8h-1zM753,616h1v7h-1zM758,618h1v1h-1zM763,612h1v3h-1zM763,616h1v6h-1zM737,616h1v2h-1zM737,619h1v3h-1zM743,615h1v3h-1zM759,617h1v1h-1zM757,619h1v3h-1zM760,616h1v1h-1zM738,615h1v1h-1zM752,615h1v1h-1z" fill="#f7ee6a" stroke="none"/>
<path d="M617,607h7v1h-7zM627,619h7v1h-7zM649,619h5v1h-5zM629,611h5v1h-5zM637,611h5v1h-5zM627,615h7v1h-7zM615,609h1v11h-1zM619,608h1v6h-1zM623,608h1v12h-1zM628,612h1v1h-1zM633,612h1v3h-1zM637,612h1v8h-1zM642,612h1v1h-1zM647,611h1v7h-1zM653,611h1v8h-1zM627,613h1v2h-1zM627,616h1v3h-1zM643,613h1v7h-1zM616,608h1v1h-1zM648,618h1v1h-1z" fill="#f3bd78" stroke="none"/>
<path d="M478,83h9v1h-9zM490,83h9v1h-9zM479,77h8v1h-8zM491,77h8v1h-8zM503,77h9v1h-9zM478,78h1v5h-1zM478,84h1v6h-1zM490,78h1v5h-1zM490,84h1v6h-1zM507,78h1v12h-1z" fill="#ffff00" stroke="none"/>
<path d="M481,107h7v1h-7zM499,107h7v1h-7zM494,106h2v1h-2zM499,103h7v1h-7zM461,99h7v1h-7zM481,99h5v1h-5zM499,99h7v1h-7zM509,104h7v1h-7zM519,104h8v1h-8zM461,107h1v1h-1zM471,107h1v1h-1zM493,102h1v1h-1zM493,107h1v1h-1zM513,101h1v3h-1zM513,105h1v3h-1zM523,101h1v3h-1zM523,105h1v3h-1zM462,105h1v2h-1zM472,106h1v1h-1zM481,100h1v7h-1zM487,101h1v6h-1zM492,103h1v2h-1zM492,106h1v1h-1zM499,104h1v3h-1zM465,101h1v2h-1zM476,101h1v1h-1zM505,100h1v3h-1zM509,99h1v5h-1zM519,99h1v5h-1zM464,103h1v1h-1zM475,102h1v2h-1zM494,103h1v1h-1zM478,99h1v1h-1zM473,105h1v1h-1zM491,105h1v1h-1zM496,105h1v1h-1zM463,104h1v1h-1zM474,104h1v1h-1zM495,104h1v1h-1zM466,100h1v1h-1zM477,100h1v1h-1zM486,100h1v1h-1z" fill="#ffff00" stroke="none"/>
<path d="M673,85h7v1h-7zM703,85h7v1h-7zM742,85h2v1h-2zM747,85h3v1h-3zM753,85h7v1h-7zM703,81h7v1h-7zM753,81h7v1h-7zM742,78h2v1h-2zM747,78h3v1h-3zM693,77h5v1h-5zM704,77h6v1h-6zM754,77h6v1h-6zM764,77h5v1h-5zM687,71h2v1h-2zM735,71h2v1h-2zM673,79h9v1h-9zM675,73h7v1h-7zM723,73h7v1h-7zM687,74h2v1h-2zM735,74h2v1h-2zM688,77h1v9h-1zM693,78h1v8h-1zM699,79h1v7h-1zM721,75h1v11h-1zM729,74h1v12h-1zM736,77h1v9h-1zM763,78h1v8h-1zM680,84h1v1h-1zM703,78h1v3h-1zM703,82h1v3h-1zM744,79h1v1h-1zM744,84h1v1h-1zM746,79h1v1h-1zM746,84h1v1h-1zM753,78h1v3h-1zM753,82h1v3h-1zM681,80h1v4h-1zM745,80h1v4h-1zM673,75h1v4h-1zM698,78h1v1h-1zM709,78h1v3h-1zM725,74h1v6h-1zM759,78h1v3h-1zM686,72h1v2h-1zM689,72h1v2h-1zM734,72h1v2h-1zM737,72h1v2h-1zM674,74h1v1h-1zM722,74h1v1h-1z" fill="#ff00ff" stroke="none"/>
</svg>
</div></div>
</body></html>
